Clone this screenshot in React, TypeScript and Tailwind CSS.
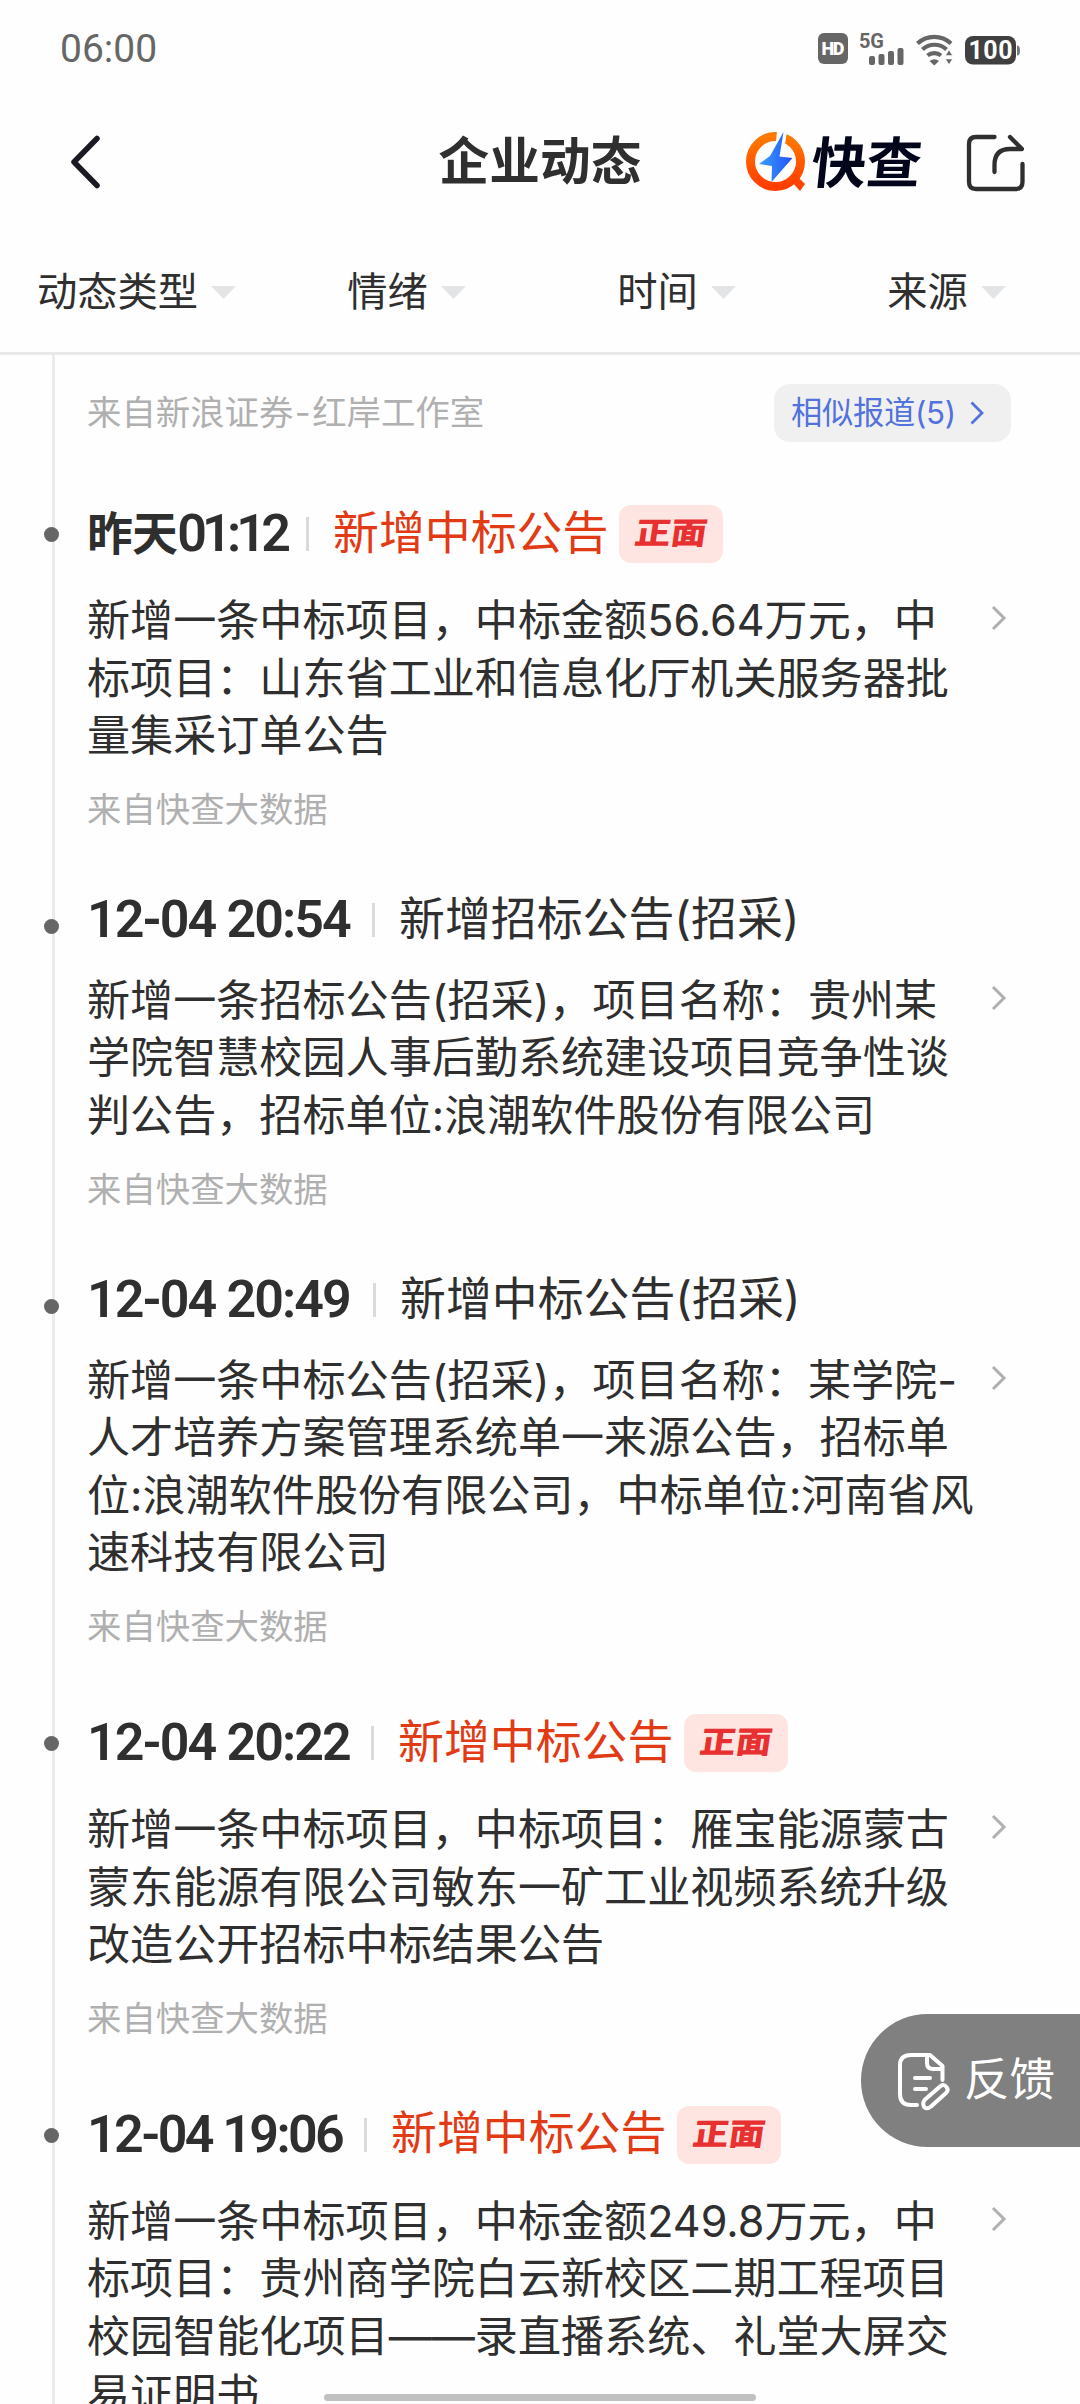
import React from "react";

type Item = {
  day?: string;
  time: string;
  timeClass: string;
  tracking: string;
  title: string;
  positive: boolean;
  lines: string[];
};

const items: Item[] = [
  {
    day: "昨天",
    time: "01:12",
    timeClass: "w-[219px]",
    tracking: "tracking-[-4.800px]",
    title: "新增中标公告",
    positive: true,
    lines: ["新增一条中标项目，中标金额56.64万元，中", "标项目：山东省工业和信息化厅机关服务器批", "量集采订单公告"],
  },
  {
    time: "12-04 20:54",
    timeClass: "w-[285px]",
    tracking: "tracking-[-1.900px]",
    title: "新增招标公告(招采)",
    positive: false,
    lines: ["新增一条招标公告(招采)，项目名称：贵州某", "学院智慧校园人事后勤系统建设项目竞争性谈", "判公告，招标单位:浪潮软件股份有限公司"],
  },
  {
    time: "12-04 20:49",
    timeClass: "w-[286px]",
    tracking: "tracking-[-1.900px]",
    title: "新增中标公告(招采)",
    positive: false,
    lines: [
      "新增一条中标公告(招采)，项目名称：某学院-",
      "人才培养方案管理系统单一来源公告，招标单",
      "位:浪潮软件股份有限公司，中标单位:河南省风",
      "速科技有限公司",
    ],
  },
  {
    time: "12-04 20:22",
    timeClass: "w-[284px]",
    tracking: "tracking-[-1.900px]",
    title: "新增中标公告",
    positive: true,
    lines: ["新增一条中标项目，中标项目：雁宝能源蒙古", "蒙东能源有限公司敏东一矿工业视频系统升级", "改造公开招标中标结果公告"],
  },
  {
    time: "12-04 19:06",
    timeClass: "w-[277px]",
    tracking: "tracking-[-2.600px]",
    title: "新增中标公告",
    positive: true,
    lines: [
      "新增一条中标项目，中标金额249.8万元，中",
      "标项目：贵州商学院白云新校区二期工程项目",
      "校园智能化项目——录直播系统、礼堂大屏交",
      "易证明书",
    ],
  },
];

function StatusBar() {
  return (
    <div className="flex h-[96px] shrink-0 items-center pl-[60px] pr-[59px]">
      <span className="mt-[2px] font-['Roboto'] text-[39px] leading-none text-[#666]">06:00</span>
      <svg className="ml-auto overflow-visible" width="204" height="34" viewBox="0 0 204 34">
        <rect x="1" y="2" width="30" height="31" rx="6" fill="#666" />
        <text x="16" y="24" textAnchor="middle" fontSize="18" fontWeight="900" fill="#fff" fontFamily="Roboto" textLength="23">HD</text>
        <text x="42" y="17" fontSize="20" fontWeight="700" fill="#666" fontFamily="Roboto" textLength="25">5G</text>
        <g fill="#666">
          <rect x="52" y="25" width="6" height="9" rx="2" />
          <rect x="61.500" y="23" width="6" height="11" rx="2" />
          <rect x="71" y="20" width="6" height="14" rx="2" />
          <rect x="80.500" y="17" width="6" height="17" rx="2" />
        </g>
        <g fill="none" stroke="#666" strokeWidth="4.200">
          <path d="M100.500 12.500 A24.500 24.500 0 0 1 134 12.500" />
          <path d="M105.500 18.500 A17.500 17.500 0 0 1 129.500 18.500" />
          <path d="M110.500 24.500 A10.500 10.500 0 0 1 124 24.500" />
        </g>
        <path d="M112.500 30 Q117.300 26.500 122 30 L117.300 34.500 Z" fill="#666" />
        <path d="M128.500 24.500 L132 19 L135.500 24.500 Z M128.500 28 L132 33.500 L135.500 28 Z" fill="#666" stroke="#fefefe" strokeWidth="0.500" />
        <rect x="148" y="5" width="51" height="28.500" rx="8" fill="#404040" />
        <path d="M200 14.500 q3 0 3 5 q0 5 -3 5 Z" fill="#777" />
        <text x="173.500" y="28.300" textAnchor="middle" fontSize="25" fontWeight="700" fill="#fff" fontFamily="Roboto" textLength="44">100</text>
      </svg>
    </div>
  );
}

function Logo() {
  return (
    <div className="flex h-[62px] w-[180px] items-center">
      <svg width="62" height="62" viewBox="0 0 62 62" className="shrink-0">
        <defs>
          <linearGradient id="ring" x1="0" y1="0" x2="0" y2="1">
            <stop offset="0" stopColor="#ff7a00" />
            <stop offset="1" stopColor="#ff3d00" />
          </linearGradient>
          <linearGradient id="bolt" x1="0" y1="0" x2="1" y2="0">
            <stop offset="0" stopColor="#3aa0ff" />
            <stop offset="1" stopColor="#2350f5" />
          </linearGradient>
        </defs>
        <circle cx="30.500" cy="30.500" r="25" fill="none" stroke="url(#ring)" strokeWidth="9" />
        <path d="M47 51 L53 46 L60 53 L55 60 Z" fill="#ff4300" />
        <path d="M32 0 L42 0 L38 27 L30 22 Z" fill="#fff" />
        <path d="M38.500 1 L25 25 L14 33 L27 35 L26.500 51 L47.500 27 L34.500 25.500 Z" fill="url(#bolt)" />
      </svg>
      <span className="-mt-[6px] ml-[5px] block origin-left -skew-x-[6deg] whitespace-nowrap font-['Noto_Sans_CJK_SC'] text-[55px] font-bold leading-none text-[#03061a]">
        快查
      </span>
    </div>
  );
}

function Header() {
  return (
    <header className="grid h-[130px] shrink-0 grid-cols-[1fr_auto_1fr] items-center pt-[2px]">
      <svg className="ml-[69px]" width="34" height="56" viewBox="0 0 34 56">
        <path d="M28 4.500 L5 28 L28 51.500" fill="none" stroke="#1b1a24" strokeWidth="5.500" strokeLinecap="round" strokeLinejoin="round" />
      </svg>
      <h1 className="text-[50.700px] font-bold leading-none text-[#2f2f2f]">企业动态</h1>
      <div className="flex items-center justify-end pr-[53px]">
        <Logo />
        <svg className="ml-[40px]" width="62" height="62" viewBox="0 0 62 62">
          <path
            d="M29.500 6 H11 Q4 6 4 13 V51 Q4 58 11 58 H50.500 Q57.500 58 57.500 51 V33 M29.500 41 V34 Q29.500 18 45 18 H57 L45 6"
            fill="none"
            stroke="#2f2f2f"
            strokeWidth="4.300"
            strokeLinecap="round"
            strokeLinejoin="round"
          />
        </svg>
      </div>
    </header>
  );
}

function Filters() {
  return (
    <nav className="grid h-[129px] shrink-0 grid-cols-4 border-b-[3px] border-[#e9e9e9] pt-[6px]">
      {["动态类型", "情绪", "时间", "来源"].map((label) => (
        <div key={label} className="flex items-center justify-center pl-[3px] text-[40.300px] text-[#2f2f2f]">
          {label}
          <svg className="ml-[13px]" width="25" height="13" viewBox="0 0 25 13">
            <path d="M0 0 H25 L12.500 13 Z" fill="#e3e4e6" />
          </svg>
        </div>
      ))}
    </nav>
  );
}

function TimelineItem({ item }: { item: Item }) {
  return (
    <article className={item.positive ? "pt-[66px]" : "pt-[60px]"}>
      <div className="relative flex h-[58px] items-center">
        <i className={`absolute left-[-43px] size-[15px] rounded-full bg-[#666] ${item.positive ? "top-[22px]" : "top-[28px]"}`} />
        <span className={`flex shrink-0 items-center whitespace-nowrap text-[#2f2f2f] ${item.timeClass}`}>
          {item.day && <span className="text-[45.900px] font-bold leading-none tracking-[-0.800px]">{item.day}</span>}
          <span className={`font-['Roboto'] text-[52px] font-semibold leading-none ${item.tracking}`}>{item.time}</span>
        </span>
        <i className="h-[34px] w-[3px] shrink-0 bg-[#dadada]" />
        <span className={`ml-[24px] whitespace-nowrap text-[45.900px] ${item.positive ? "-mt-[2px] text-[#e23a14]" : "text-[#2f2f2f]"}`}>{item.title}</span>
        {item.positive && (
          <span className="ml-[11px] flex h-[58px] w-[104px] items-center justify-center rounded-[12px] bg-[#ffe5e1]">
            <span className="-mt-[2px] block -skew-x-[7deg] scale-y-[0.85] text-[36px] font-black leading-none text-[#e83030]">正面</span>
          </span>
        )}
      </div>
      <div className={`flex items-start ${item.positive ? "pt-[29px]" : "pt-[23px]"}`}>
        <p className="w-[904px] shrink-0 whitespace-nowrap text-[43.100px] leading-[57.600px] text-[#2f2f2f]">
          {item.lines.map((line) => (
            <span key={line} className="block">
              {line}
            </span>
          ))}
        </p>
        <svg className="mt-[13px] shrink-0" width="16" height="26" viewBox="0 0 16 26">
          <path d="M2 2 L13 13 L2 24" fill="none" stroke="#b0b0b0" strokeWidth="3" />
        </svg>
      </div>
      <div className="mt-[25px] h-[41px] text-[34.400px] leading-[40px] text-[#b0b0b0]">来自快查大数据</div>
    </article>
  );
}

export default function App() {
  return (
    <div className="relative flex h-[2404px] w-[1080px] flex-col overflow-hidden bg-[#fefefe] font-['Inter','Noto_Sans_CJK_SC',sans-serif]">
      <StatusBar />
      <Header />
      <Filters />
      <main className="min-h-0 flex-1 overflow-hidden pl-[52px]">
        <div className="h-[2200px] border-l-[3px] border-[#ebebee] pl-[32px] pr-[69px] pt-[29px]">
          <div className="-mb-[3px] flex h-[58px] items-center justify-between">
            <span className="whitespace-nowrap text-[34.400px] text-[#b0b0b0]">
              来自新浪证券<span className="px-[1.500px]">-</span>红岸工作室
            </span>
            <span className="flex h-[58px] w-[237px] items-center rounded-[16px] bg-[#f0f0f1] pl-[17px] text-[31.300px] text-[#5272dc]">
              <span className="tracking-[-0.300px]">相似报道(5)</span>
              <svg className="ml-[14px]" width="14" height="24" viewBox="0 0 14 24">
                <path d="M1.500 1.500 L12 12 L1.500 22.500" fill="none" stroke="#5272dc" strokeWidth="2.800" />
              </svg>
            </span>
          </div>
          {items.map((item) => (
            <TimelineItem key={item.time} item={item} />
          ))}
        </div>
      </main>
      <button className="absolute right-0 top-[2014px] flex h-[133px] w-[219px] items-center rounded-l-full bg-[#808080] pl-[36px] text-[45.500px] text-white">
        <svg width="54" height="60" viewBox="0 0 54 60" className="shrink-0">
          <g fill="none" stroke="#fff" strokeWidth="4" strokeLinecap="round" strokeLinejoin="round">
            <path d="M20 54 H14 Q3 54 3 43 V14 Q3 4 14 4 H33 L45.500 15 V29" />
            <path d="M30 5 V12 Q30 18 36 18 H45" />
            <path d="M18 27 H33 M18 38 H29" />
            <path d="M27.500 49 L43 35.500 Q46.500 32.500 49.500 36 Q52 39 49 42 L34 55.500 Q30 58.500 27.500 56.500 Q25 53 27.500 49 Z" />
          </g>
        </svg>
        <span className="ml-[13px] whitespace-nowrap">反馈</span>
      </button>
      <div className="absolute bottom-[3px] left-[324px] h-[7px] w-[432px] rounded-full bg-[#c0c0c0]" />
    </div>
  );
}
